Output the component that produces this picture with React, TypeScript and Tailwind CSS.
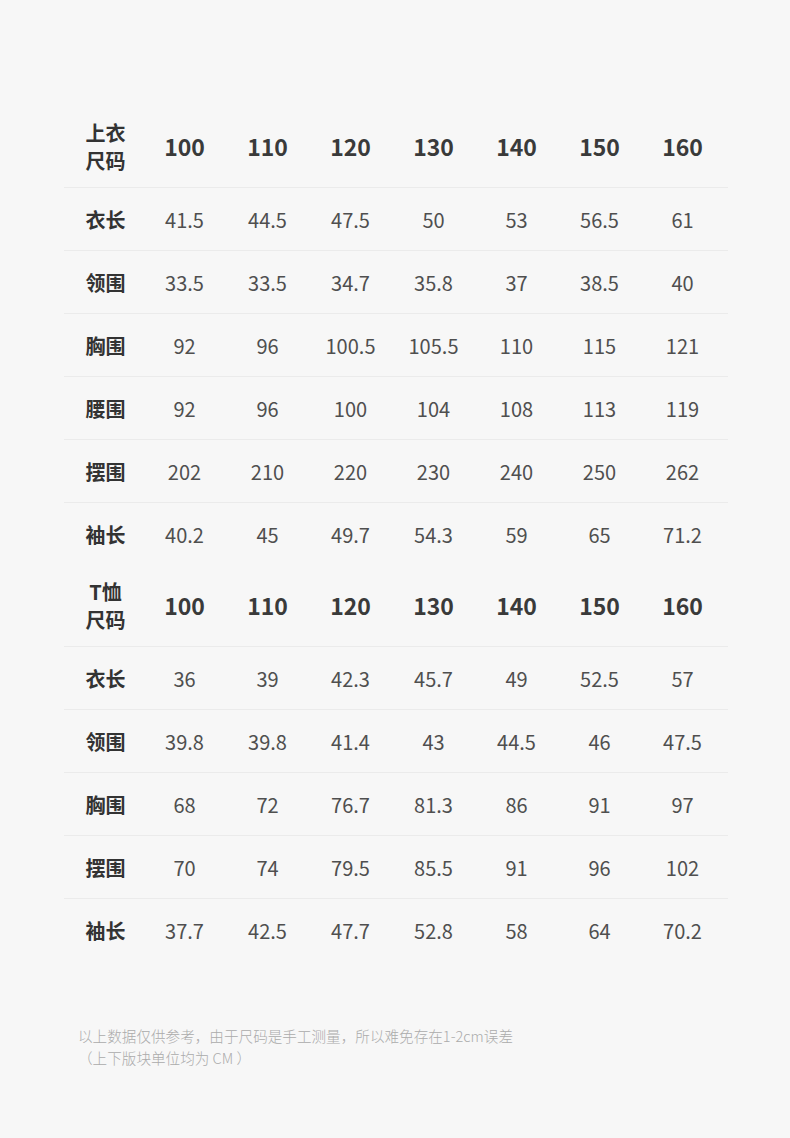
import React from "react";

const sizes = ["100", "110", "120", "130", "140", "150", "160"];

const top: [string, string[]][] = [
  ["衣长", ["41.5", "44.5", "47.5", "50", "53", "56.5", "61"]],
  ["领围", ["33.5", "33.5", "34.7", "35.8", "37", "38.5", "40"]],
  ["胸围", ["92", "96", "100.5", "105.5", "110", "115", "121"]],
  ["腰围", ["92", "96", "100", "104", "108", "113", "119"]],
  ["摆围", ["202", "210", "220", "230", "240", "250", "262"]],
  ["袖长", ["40.2", "45", "49.7", "54.3", "59", "65", "71.2"]],
];

const tee: [string, string[]][] = [
  ["衣长", ["36", "39", "42.3", "45.7", "49", "52.5", "57"]],
  ["领围", ["39.8", "39.8", "41.4", "43", "44.5", "46", "47.5"]],
  ["胸围", ["68", "72", "76.7", "81.3", "86", "91", "97"]],
  ["摆围", ["70", "74", "79.5", "85.5", "91", "96", "102"]],
  ["袖长", ["37.7", "42.5", "47.7", "52.8", "58", "64", "70.2"]],
];

function Table({ l1, l2, rows }: { l1: string; l2: string; rows: [string, string[]][] }) {
  return (
    <div className="w-[664px]">
      <div className="grid grid-cols-[79px_repeat(7,83px)] h-[81px] items-center">
        <div className="flex flex-col items-center pl-[4px] text-[20px] leading-[28px] font-bold text-[#333]">
          <span>{l1}</span>
          <span>{l2}</span>
        </div>
        {sizes.map((s) => (
          <div key={s} className="text-center text-[23px] font-bold text-[#3a3a3a]">
            {s}
          </div>
        ))}
      </div>
      {rows.map(([label, vals]) => (
        <div
          key={label}
          className="grid grid-cols-[79px_repeat(7,83px)] h-[63px] items-center border-t border-[#ebebeb]"
        >
          <div className="text-center pl-[4px] text-[20px] leading-[28px] pt-[2px] font-bold text-[#333]">{label}</div>
          {vals.map((v, i) => (
            <div key={i} className="text-center text-[20px] leading-[28px] pt-[2px] text-[#4f4f4f]">
              {v}
            </div>
          ))}
        </div>
      ))}
    </div>
  );
}

export default function App() {
  return (
    <div
      className="w-[790px] h-[1138px] bg-[#f7f7f7] pl-[64px] pt-[106px]"
      style={{ fontFamily: '"Noto Sans CJK SC", "Noto Sans", sans-serif' }}
    >
      <Table l1="上衣" l2="尺码" rows={top} />
      <Table l1="T恤" l2="尺码" rows={tee} />
      <div className="mt-[64px] pl-[14px] text-[14.6px] leading-[22px] font-light text-[#ababab]">
        <div>以上数据仅供参考，由于尺码是手工测量，所以难免存在1-2cm误差</div>
        <div>（上下版块单位均为 CM ）</div>
      </div>
    </div>
  );
}
